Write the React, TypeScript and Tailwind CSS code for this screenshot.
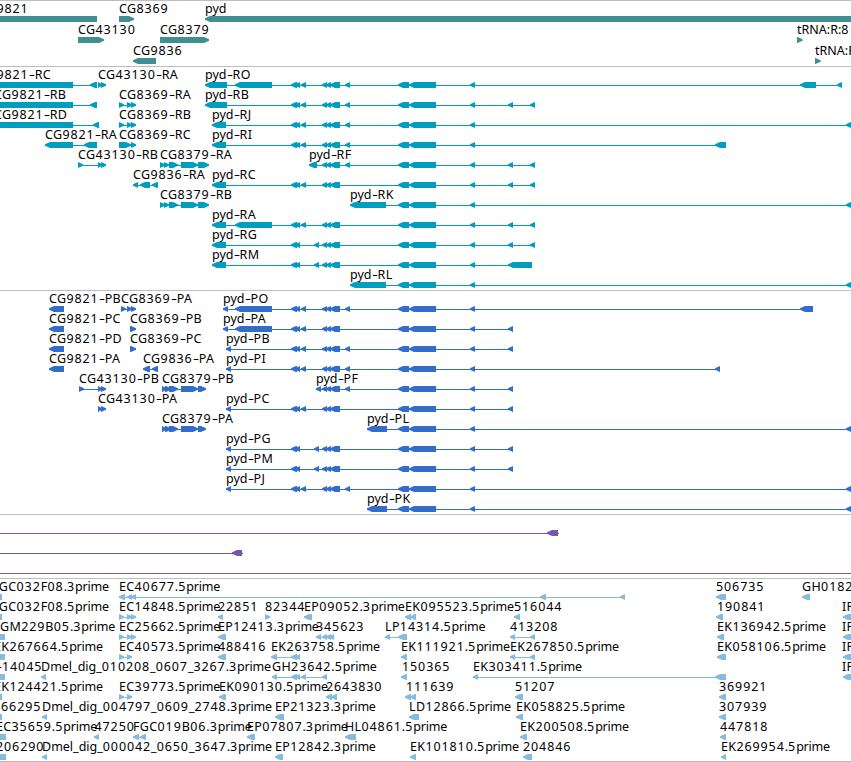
import React from "react";

type Span = [number, number];
type Feature = { name: string; at: number; dir: "L" | "R"; blocks: Span[]; line?: Span };

const WIDTH = 851;

const f = (name: string, at: number, dir: "L" | "R", ...blocks: Span[]): Feature => ({ name, at, dir, blocks });

// Exon groups shared by the pyd isoforms
const trio: Span[] = [[291, 297], [295, 300], [301, 306]];
const duo: Span[] = [[291, 297], [295, 300], [314, 319]];
const mid: Span[] = [[322, 327], [326, 331], [330, 340]];
const small: Span[] = [[345, 350]];
const core: Span[] = [[398, 409], [409, 436], [470, 475]];
const wide: Span[] = [[235, 272]];
const near: Span[] = [[508, 513]];
const tail: Span[] = [[508, 513], [530, 535]];
const edge: Span[] = [[846, 851.5]];
const a: Span[] = [[205, 227]];
const b: Span[] = [[212, 226]];
const c: Span[] = [[226, 231]];
const d: Span[] = [[223, 228]];
const cg8369: Span[] = [[119, 124], [127, 132], [131, 136]];
const cg8379: Span[] = [[160, 165], [164, 169], [169, 178], [181, 198], [198, 209]];
const cg8379p: Span[] = [[162, 167], [165, 171], [169, 178], [181, 198], [198, 206]];
const cg43130: Span[] = [[98, 102], [101, 106]];

const genes: Feature[][] = [
  [f("CG9821", -21, "L", [-20, 97]), f("CG8369", 119, "R", [119, 134]), f("pyd", 205, "L", [205, 870])],
  [f("CG43130", 78, "R", [78, 104]), f("CG8379", 160, "R", [160, 209]), f("tRNA:R:8", 797, "R", [797, 802.5])],
  [f("CG9836", 133, "L", [133, 156]), f("tRNA:R", 815, "R", [815, 820.5])],
];

const transcripts: Feature[][] = [
  [f("CG9821-RC", -21, "L", [-20, 73], [90, 97]), f("CG43130-RA", 98, "R", ...cg43130), f("pyd-RO", 205, "L", ...a, ...wide, ...trio, ...mid, ...small, ...core, [800, 816], [837, 842])],
  [f("CG9821-RB", -6, "L", [-20, 73], [90, 97]), f("CG8369-RA", 119, "R", ...cg8369), f("pyd-RB", 205, "L", ...a, ...trio, ...mid, ...small, ...core, ...tail)],
  [f("CG9821-RD", -6, "L", [-20, 73], [93, 99]), f("CG8369-RB", 119, "R", ...cg8369), f("pyd-RJ", 212, "L", ...b, ...trio, ...mid, ...small, ...core, ...edge)],
  [f("CG9821-RA", 45, "L", [45, 73], [84, 97]), f("CG8369-RC", 119, "R", [119, 131], [131, 136]), f("pyd-RI", 212, "L", ...b, ...trio, ...mid, ...small, ...core, [715, 726])],
  [f("CG43130-RB", 78, "R", [78, 83], ...cg43130), f("CG8379-RA", 160, "R", ...cg8379), f("pyd-RF", 309, "L", [309, 317], ...mid, ...small, ...core, ...tail)],
  [f("CG9836-RA", 133, "L", [133, 138], [140, 150], [152, 158]), f("pyd-RC", 212, "L", ...b, ...trio, ...mid, ...core, ...tail)],
  [f("CG8379-RB", 160, "R", ...cg8379), f("pyd-RK", 350, "L", [350, 386], ...core, ...edge)],
  [f("pyd-RA", 212, "L", ...b, ...wide, ...trio, ...mid, ...core, ...tail)],
  [f("pyd-RG", 212, "L", ...b, ...duo, ...mid, ...core, ...tail)],
  [f("pyd-RM", 212, "L", ...b, ...duo, ...mid, ...core, [508, 532])],
  [f("pyd-RL", 350, "L", [350, 386], ...core, ...edge)],
];

const proteins: Feature[][] = [
  [f("CG9821-PB", 49, "L", [49, 64]), f("CG8369-PA", 121, "R", [121, 126], [127, 132], [131, 136]), f("pyd-PO", 223, "L", ...d, ...wide, ...trio, ...mid, ...small, ...core, [800, 813])],
  [f("CG9821-PC", 49, "L", [49, 64]), f("CG8369-PB", 130, "R", [130, 136]), f("pyd-PA", 223, "L", ...d, ...wide, ...trio, ...mid, ...core, ...near)],
  [f("CG9821-PD", 49, "L", [49, 64]), f("CG8369-PC", 130, "R", [130, 136]), f("pyd-PB", 226, "L", ...c, ...trio, ...mid, ...small, ...core, ...near)],
  [f("CG9821-PA", 49, "L", [49, 64]), f("CG9836-PA", 143, "L", [143, 150], [152, 158]), f("pyd-PI", 226, "L", ...c, ...trio, ...mid, ...small, ...core, [715, 720])],
  [f("CG43130-PB", 79, "R", [79, 84], ...cg43130), f("CG8379-PB", 162, "R", ...cg8379p), f("pyd-PF", 316, "L", [316, 321], ...mid, ...small, ...core, ...near)],
  [f("CG43130-PA", 98, "R", ...cg43130), f("pyd-PC", 226, "L", ...c, ...trio, ...mid, ...core, ...near)],
  [f("CG8379-PA", 162, "R", ...cg8379p), f("pyd-PL", 367, "L", [367, 387], ...core, ...edge)],
  [f("pyd-PG", 226, "L", ...c, ...duo, ...mid, ...core, ...near)],
  [f("pyd-PM", 226, "L", ...c, ...duo, ...mid, ...core, ...near)],
  [f("pyd-PJ", 226, "L", ...c, ...trio, ...mid, ...small, ...core, ...edge)],
  [f("pyd-PK", 367, "L", [367, 387], ...core, ...edge)],
];

const predictions: Feature[][] = [
  [{ name: "", at: 0, dir: "L", blocks: [[547, 558]], line: [0, 559] }],
  [{ name: "", at: 0, dir: "L", blocks: [[232, 242]], line: [0, 243] }],
  [{ name: "", at: 0, dir: "L", blocks: [], line: [0, WIDTH] }],
];

const ip = f("IP", 842, "L", [843, 858]);

const ests: Feature[][] = [
  [f("FGC032F08.3prime", -8, "L", [-20, 2]), f("EC40677.5prime", 119, "L", [119, 125], [127, 132], [131, 136], [540, 546], [620, 625]), f("506735", 716, "L", [716, 726]), f("GH0182", 802, "L", [802, 810])],
  [f("FGC032F08.5prime", -8, "L", [-20, 2]), f("EC14848.5prime", 119, "R", ...cg8369), f("22851", 218, "L", [218, 223]), f("82344", 265, "R", [265, 270]), f("EP09052.3prime", 304, "L", [304, 312]), f("EK095523.5prime", 405, "L", [405, 411], [410, 416]), f("516044", 514, "L", [514, 520]), f("190841", 717, "L", [716, 723]), ip],
  [f("GM229B05.3prime", 0, "L", [-20, 5]), f("EC25662.5prime", 119, "R", ...cg8369), f("EP12413.3prime", 218, "L", [218, 226]), f("345623", 316, "L", [316, 321], [322, 327], [326, 331], [329, 334]), f("LP14314.5prime", 385, "L", [385, 390], [398, 407]), f("413208", 510, "L", [510, 515], [530, 535]), f("EK136942.5prime", 717, "L", [717, 724]), ip],
  [f("EK267664.5prime", -6, "L", [-20, 5]), f("EC40573.5prime", 119, "R", [119, 124], [127, 132]), f("488416", 218, "L", [218, 226]), f("EK263758.5prime", 271, "L", [271, 277], [291, 297], [295, 300]), f("EK111921.5prime", 401, "L", [401, 407]), f("EK267850.5prime", 510, "L", [510, 515], [530, 535]), f("EK058106.5prime", 717, "L", [717, 726]), ip],
  [f("-14045", -4, "L", [-20, 5]), f("Dmel_dig_010208_0607_3267.3prime", 41, "L", [41, 46]), f("GH23642.5prime", 272, "L", [272, 277], [291, 297], [295, 300], [301, 306], [322, 327]), f("150365", 402, "L", [401, 407]), f("EK303411.5prime", 473, "L", [473, 478], [715, 726]), ip],
  [f("EK124421.5prime", -6, "L", [-20, 2]), f("EC39773.5prime", 119, "R", [119, 124], [127, 132]), f("EK090130.5prime", 219, "L", [219, 226]), f("2643830", 326, "L", [326, 332], [331, 337]), f("111639", 406, "L", [405, 411], [410, 416]), f("51207", 515, "L", [515, 523]), f("369921", 719, "L", [719, 726])],
  [f("166295", -7, "L", [-20, 2]), f("Dmel_dig_004797_0609_2748.3prime", 42, "L", [42, 47]), f("EP21323.3prime", 275, "L", [275, 284]), f("LD12866.5prime", 409, "L", [409, 419]), f("EK058825.5prime", 516, "L", [516, 523]), f("307939", 719, "L", [719, 726])],
  [f("EC35659.5prime", -4, "L", [-20, 6]), f("47250", 94.5, "L", [94, 99]), f("FGC019B06.3prime", 133, "L", [133, 139], [140, 146]), f("EP07807.3prime", 247, "L", [247, 255]), f("HL04861.5prime", 345, "L", [345, 356]), f("EK200508.5prime", 520, "L", [520, 527]), f("447818", 720, "L", [720, 726])],
  [f("206290", -4, "L", [-20, 6]), f("Dmel_dig_000042_0650_3647.3prime", 42, "L", [42, 47]), f("EP12842.3prime", 275, "L", [275, 283]), f("EK101810.5prime", 410, "L", [410, 416]), f("204846", 523, "L", [523, 532]), f("EK269954.5prime", 721, "L", [721, 726])],
];

function arrow([x1, x2]: Span, dir: "L" | "R") {
  const head = Math.min(5, x2 - x1);
  return dir === "L"
    ? `${x1},2.2 ${x1 + head},0 ${x2},0 ${x2},6 ${x1 + head},6 ${x1},3.8`
    : `${x2},2.2 ${x2 - head},0 ${x1},0 ${x1},6 ${x2 - head},6 ${x2},3.8`;
}

// Digits and capitals are set wider than lowercase letters; hyphens are drawn long
function runClass(run: string) {
  if (run === "-") return "inline-block w-[6px] scale-x-150 text-center";
  if (/^[0-9]/.test(run)) return "tracking-[0.9px]";
  if (/^[A-Z]+$/.test(run)) return "tracking-[0.35px]";
  if (/prime$/.test(run)) return "tracking-[-0.2px]";
  return "tracking-normal";
}

function Label({ name, at }: { name: string; at: number }) {
  return (
    <span className="absolute top-0 leading-[16px] whitespace-pre" style={{ left: at }}>
      {name.split(/([0-9]+|-)/).filter(Boolean).map((run, i) => (
        <span key={i} className={runClass(run)}>{run}</span>
      ))}
    </span>
  );
}

function Row({ features, className }: { features: Feature[]; className: string }) {
  return (
    <div className={`relative w-full shrink-0 ${className}`}>
      <svg className="absolute left-0 top-[15px] h-[6px] w-[851px] fill-current" viewBox="0 0 851 6">
        {features.map((ft, i) => {
          const start = ft.line ? ft.line[0] : ft.blocks[0][0];
          const end = ft.line ? ft.line[1] : ft.blocks[ft.blocks.length - 1][1];
          return (
            <g key={i}>
              <rect x={start} y={3} width={end - start} height={1} />
              {ft.blocks.map((s, j) => (
                <polygon key={j} points={arrow(s, ft.dir)} />
              ))}
            </g>
          );
        })}
      </svg>
      <div className="text-black">
        {features.map((ft, i) => (ft.name ? <Label key={i} name={ft.name} at={ft.at} /> : null))}
      </div>
    </div>
  );
}

function Track({ rows, className, rowClass = "h-5" }: { rows: Feature[][]; className: string; rowClass?: string }) {
  return (
    <section className={`flex flex-col border-t border-[#bebebe] ${className}`}>
      {rows.map((r, i) => (
        <Row key={i} features={r} className={rowClass} />
      ))}
    </section>
  );
}

export default function App() {
  return (
    <main className="flex h-[762px] w-[851px] flex-col overflow-hidden bg-white font-['Noto_Sans',sans-serif] text-[12.5px]">
      <Track rows={genes} className="pb-[2px] text-[#408d92]" rowClass="h-[21px]" />
      <Track rows={transcripts} className="pb-[3px] text-[#009dbf]" />
      <Track rows={proteins} className="pb-[3px] text-[#326dcc]" />
      <Track rows={predictions} className="pb-[3px] text-[#7658a8]" />
      <Track rows={ests} className="border-b pb-[2px] text-[#87bbde]" />
    </main>
  );
}
